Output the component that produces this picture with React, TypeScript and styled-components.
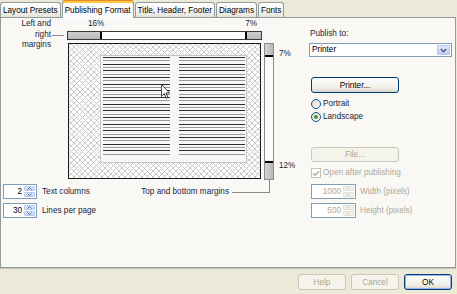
import React from 'react'
import styled, { createGlobalStyle } from 'styled-components'

const GlobalStyle = createGlobalStyle`
  html, body {
    margin: 0;
    padding: 0;
    background: #ece9d8;
  }
  body {
    font-family: 'Liberation Sans', Arial, sans-serif;
    font-size: 8.2px;
    color: #1c1c3c;
  }
  * {
    box-sizing: border-box;
  }
`

const Dialog = styled.div`
  width: 457px;
  height: 294px;
  display: flex;
  flex-direction: column;
  overflow: hidden;
  background: #ece9d8;
`

const TabStrip = styled.div`
  height: 17px;
  display: flex;
  align-items: flex-end;
  gap: 1px;
  position: relative;
  z-index: 1;
`

const Tab = styled.div<{ $active?: boolean }>`
  height: ${(p) => (p.$active ? 18 : 15)}px;
  margin-bottom: ${(p) => (p.$active ? -1 : 0)}px;
  padding: ${(p) => (p.$active ? '2px 2px 0' : '0 2px')};
  display: flex;
  align-items: center;
  border: 1px solid #919b9c;
  border-bottom: none;
  border-top-color: ${(p) => (p.$active ? '#e68b2c' : '#919b9c')};
  border-radius: 3px 3px 0 0;
  background: ${(p) =>
    p.$active ? '#fcfcfe' : 'linear-gradient(#ffffff, #f3f3ef 60%, #e4e2d8)'};
  box-shadow: ${(p) => (p.$active ? 'inset 0 2px 0 #ffc83c' : 'none')};
  white-space: nowrap;
  color: #000;
`

const Panel = styled.div`
  width: 456px;
  height: 251px;
  border: 1px solid #919b9c;
  background: #f9f8f4;
  box-shadow: 0 1px 0 #c5c2b2;
  display: flex;
`

/* ---- left half: margins preview ---- */

const LeftPane = styled.div`
  width: 299px;
  display: grid;
  grid-template-columns: 50px 16px 195px 2px 10px 1fr;
  grid-template-rows: 13px 9px 3px 137px auto;
`

const MarginCaption = styled.div`
  grid-column: 1;
  grid-row: 1 / 5;
  text-align: right;
  line-height: 10.5px;
  padding-top: 1px;
`

const HConnector = styled.div`
  grid-column: 2;
  grid-row: 2;
  align-self: center;
  height: 1px;
  margin: 0 3px 0 1px;
  background: #8a8a8a;
`

const PercentRow = styled.div`
  grid-column: 3;
  grid-row: 1;
  display: flex;
  justify-content: space-between;
  padding: 1px 5px 0 21px;
  line-height: 10px;
`

const HSlider = styled.div`
  grid-column: 3;
  grid-row: 2;
  display: flex;
  border: 1px solid #3e3838;
  background: #ffffff;
`

const VSlider = styled.div`
  grid-column: 5;
  grid-row: 4;
  display: flex;
  flex-direction: column;
  border: 1px solid #8c8c8c;
  background: #fbfbfb;
`

const Fill = styled.div<{ $size: number; $vertical?: boolean }>`
  flex: 0 0 ${(p) => p.$size}px;
  background: ${(p) =>
    p.$vertical ? 'linear-gradient(90deg, #d4d4d4, #b8b8b8)' : 'linear-gradient(#cfcfcf, #b9b9b9)'};
`

const Thumb = styled.div`
  flex: 0 0 2px;
  background: #000;
`

const Track = styled.div`
  flex: 1;
`

const Preview = styled.div`
  grid-column: 3;
  grid-row: 4;
  position: relative;
  height: 136px;
  margin: 0 1px;
  border: 1px solid #1a1a1a;
  padding: 11px 13px 15px 31px;
  display: flex;
  background-color: #fdfdfd;
  background-image: repeating-linear-gradient(
      45deg,
      #c9c9c9 0 0.7px,
      transparent 0.7px 4px
    ),
    repeating-linear-gradient(-45deg, #c9c9c9 0 0.7px, transparent 0.7px 4px);
`

const Sheet = styled.div`
  flex: 1;
  display: flex;
  gap: 9px;
  padding: 1px 1px 0 2px;
  border: 1px solid #c6c6c6;
  background: #f7f7f7;
`

const TextColumn = styled.div`
  flex: 1;
  height: 100px;
  background: repeating-linear-gradient(
    #2c2c2c 0 1px,
    transparent 1px 3.33px,
    #9a9a9a 3.33px 4.33px,
    transparent 4.33px 6.66px
  );
`

const Pointer = styled.svg`
  position: absolute;
  left: 92px;
  top: 40px;
`

const VLabels = styled.div`
  grid-column: 6;
  grid-row: 4;
  display: flex;
  flex-direction: column;
  justify-content: space-between;
  padding: 6px 0 9px 5px;
  line-height: 10px;
`

const BottomRow = styled.div`
  grid-column: 1 / -1;
  grid-row: 5;
  display: flex;
  align-items: flex-start;
`

const SpinStack = styled.div`
  display: flex;
  flex-direction: column;
  gap: 4px;
  padding: 4px 0 0 2px;
`

const FieldRow = styled.div<{ $disabled?: boolean }>`
  display: flex;
  align-items: center;
  gap: 5px;
  color: ${(p) => (p.$disabled ? '#aca899' : 'inherit')};
`

const SpinBox = styled.div<{ $width: number; $disabled?: boolean }>`
  width: ${(p) => p.$width}px;
  height: 15px;
  display: flex;
  align-items: stretch;
  padding: 1px;
  border: 1px solid #7f9db9;
  background: #ffffff;
  color: ${(p) => (p.$disabled ? '#aca899' : '#000')};
`

const SpinValue = styled.div`
  flex: 1;
  text-align: right;
  padding-right: 2px;
  line-height: 11px;
`

const SpinButtons = styled.div`
  width: 11px;
  display: flex;
  flex-direction: column;
  gap: 1px;
`

const SpinButton = styled.div<{ $disabled?: boolean }>`
  flex: 1;
  display: flex;
  align-items: center;
  justify-content: center;
  border-radius: 1px;
  border: 1px solid ${(p) => (p.$disabled ? '#e2e0d6' : '#b6c9f3')};
  background: ${(p) =>
    p.$disabled ? '#f4f3ee' : 'linear-gradient(#e4ecfd, #c5d5f8)'};
`

const BottomCaption = styled.div`
  margin-left: auto;
  margin-right: 30px;
  display: flex;
  align-items: flex-start;
`

const CaptionText = styled.div`
  margin-top: 7px;
  line-height: 10px;
`

const Elbow = styled.div`
  width: 38px;
  height: 13px;
  margin-left: 3px;
  border-right: 1px solid #8a8a8a;
  border-bottom: 1px solid #8a8a8a;
`

/* ---- right half: output options ---- */

const RightPane = styled.div`
  width: 143px;
  margin-left: 9px;
  padding-top: 11px;
  display: flex;
  flex-direction: column;
`

const FieldLabel = styled.div`
  line-height: 10px;
  padding-left: 1px;
`

const Select = styled.div`
  margin-top: 4px;
  height: 14px;
  display: flex;
  border: 1px solid #7f9db9;
  background: #ffffff;
  padding: 1px;
`

const SelectValue = styled.div`
  flex: 1;
  padding-left: 1px;
  line-height: 10px;
  color: #000;
`

const SelectArrow = styled.div`
  width: 13px;
  display: flex;
  align-items: center;
  justify-content: center;
  border-radius: 1px;
  border: 1px solid #b6c9f3;
  background: linear-gradient(#dfe8fd, #bccef7);
`

const PushButton = styled.div<{ $width: number; $disabled?: boolean; $default?: boolean }>`
  width: ${(p) => p.$width}px;
  height: 16px;
  display: flex;
  align-items: center;
  justify-content: center;
  border-radius: 3px;
  border: 1px solid ${(p) => (p.$disabled ? '#c9c7ba' : '#003c74')};
  background: ${(p) =>
    p.$disabled ? '#f5f4ea' : 'linear-gradient(#ffffff, #f0efea 70%, #d9d4c8)'};
  box-shadow: ${(p) => (p.$default ? 'inset 0 0 0 1px #9bb7ee' : 'none')};
  color: ${(p) => (p.$disabled ? '#aca899' : '#000')};
`

const OptionRow = styled.div<{ $disabled?: boolean }>`
  height: 10px;
  display: flex;
  align-items: center;
  gap: 2px;
  margin-left: 2px;
  line-height: 10px;
  color: ${(p) => (p.$disabled ? '#aca899' : 'inherit')};
`

const Radio = styled.div<{ $checked?: boolean }>`
  width: 10px;
  height: 10px;
  border-radius: 50%;
  border: 1px solid #1c5180;
  background: linear-gradient(135deg, #dcd9cc, #ffffff);
  display: flex;
  align-items: center;
  justify-content: center;
  &::after {
    content: '';
    width: 4px;
    height: 4px;
    border-radius: 50%;
    background: ${(p) => (p.$checked ? '#2aa02a' : 'transparent')};
  }
`

const CheckBox = styled.div`
  width: 10px;
  height: 10px;
  border: 1px solid #c4c2b5;
  background: #ffffff;
  display: flex;
  align-items: center;
  justify-content: center;
`

const Footer = styled.div`
  display: flex;
  justify-content: flex-end;
  gap: 5px;
  padding: 6px 5px 0 0;
`

const Chevron: React.FC<{ up?: boolean; color: string }> = ({ up, color }) => (
  <svg width="5" height="3" viewBox="0 0 5 3">
    <path
      d={up ? 'M0.5 2.5 L2.5 0.5 L4.5 2.5' : 'M0.5 0.5 L2.5 2.5 L4.5 0.5'}
      stroke={color}
      strokeWidth="1"
      fill="none"
    />
  </svg>
)

const Spinner: React.FC<{ value: string; width: number; disabled?: boolean }> = ({
  value,
  width,
  disabled,
}) => {
  const c = disabled ? '#c9c7ba' : '#4d6185'
  return (
    <SpinBox $width={width} $disabled={disabled}>
      <SpinValue>{value}</SpinValue>
      <SpinButtons>
        <SpinButton $disabled={disabled}>
          <Chevron up color={c} />
        </SpinButton>
        <SpinButton $disabled={disabled}>
          <Chevron color={c} />
        </SpinButton>
      </SpinButtons>
    </SpinBox>
  )
}

const tabs = ['Layout Presets', 'Publishing Format', 'Title, Header, Footer', 'Diagrams', 'Fonts']

const App: React.FC = () => {
  return (
    <Dialog>
      <GlobalStyle />
      <TabStrip>
        {tabs.map((t) => (
          <Tab key={t} $active={t === 'Publishing Format'}>
            {t}
          </Tab>
        ))}
      </TabStrip>
      <Panel>
        <LeftPane>
          <MarginCaption>
            Left and
            <br />
            right
            <br />
            margins
          </MarginCaption>
          <HConnector />
          <PercentRow>
            <span>16%</span>
            <span>7%</span>
          </PercentRow>
          <HSlider>
            <Fill $size={32} />
            <Thumb />
            <Track />
            <Thumb />
            <Fill $size={14} />
          </HSlider>
          <Preview>
            <Sheet>
              <TextColumn />
              <TextColumn />
            </Sheet>
            <Pointer width="9" height="15" viewBox="0 0 12 20">
              <path
                d="M0.5 0.5 V16.5 L4.3 12.8 L7 19 L9.2 18 L6.6 12 H11.5 Z"
                fill="#ffffff"
                stroke="#000000"
                strokeWidth="1"
              />
            </Pointer>
          </Preview>
          <VSlider>
            <Fill $size={11} $vertical />
            <Thumb />
            <Track />
            <Thumb />
            <Fill $size={16} $vertical />
          </VSlider>
          <VLabels>
            <span>7%</span>
            <span>12%</span>
          </VLabels>
          <BottomRow>
            <SpinStack>
              <FieldRow>
                <Spinner value="2" width={34} />
                Text columns
              </FieldRow>
              <FieldRow>
                <Spinner value="30" width={34} />
                Lines per page
              </FieldRow>
            </SpinStack>
            <BottomCaption>
              <CaptionText>Top and bottom margins</CaptionText>
              <Elbow />
            </BottomCaption>
          </BottomRow>
        </LeftPane>

        <RightPane>
          <FieldLabel>Publish to:</FieldLabel>
          <Select>
            <SelectValue>Printer</SelectValue>
            <SelectArrow>
              <svg width="7" height="5" viewBox="0 0 7 5">
                <path d="M0.8 1 L3.5 3.7 L6.2 1" stroke="#4d6185" strokeWidth="1.6" fill="none" />
              </svg>
            </SelectArrow>
          </Select>
          <PushButton $width={88} style={{ marginTop: 20, marginLeft: 2 }}>
            Printer...
          </PushButton>
          <OptionRow style={{ marginTop: 6 }}>
            <Radio />
            Portrait
          </OptionRow>
          <OptionRow style={{ marginTop: 3 }}>
            <Radio $checked />
            Landscape
          </OptionRow>
          <PushButton $width={88} $disabled style={{ marginTop: 25, marginLeft: 2, height: 15 }}>
            File...
          </PushButton>
          <OptionRow $disabled style={{ marginTop: 6 }}>
            <CheckBox>
              <svg width="8" height="7" viewBox="0 0 8 7">
                <path d="M1 3.2 L3 5.2 L7 1.2" stroke="#aeab9e" strokeWidth="1.4" fill="none" />
              </svg>
            </CheckBox>
            Open after publishing
          </OptionRow>
          <FieldRow $disabled style={{ marginTop: 6, marginLeft: 2, gap: 4 }}>
            <Spinner value="1000" width={45} disabled />
            Width (pixels)
          </FieldRow>
          <FieldRow $disabled style={{ marginTop: 4, marginLeft: 2, gap: 4 }}>
            <Spinner value="500" width={45} disabled />
            Height (pixels)
          </FieldRow>
        </RightPane>
      </Panel>
      <Footer>
        <PushButton $width={48} $disabled>
          Help
        </PushButton>
        <PushButton $width={48} $disabled>
          Cancel
        </PushButton>
        <PushButton $width={48} $default>
          OK
        </PushButton>
      </Footer>
    </Dialog>
  )
}

export default App
